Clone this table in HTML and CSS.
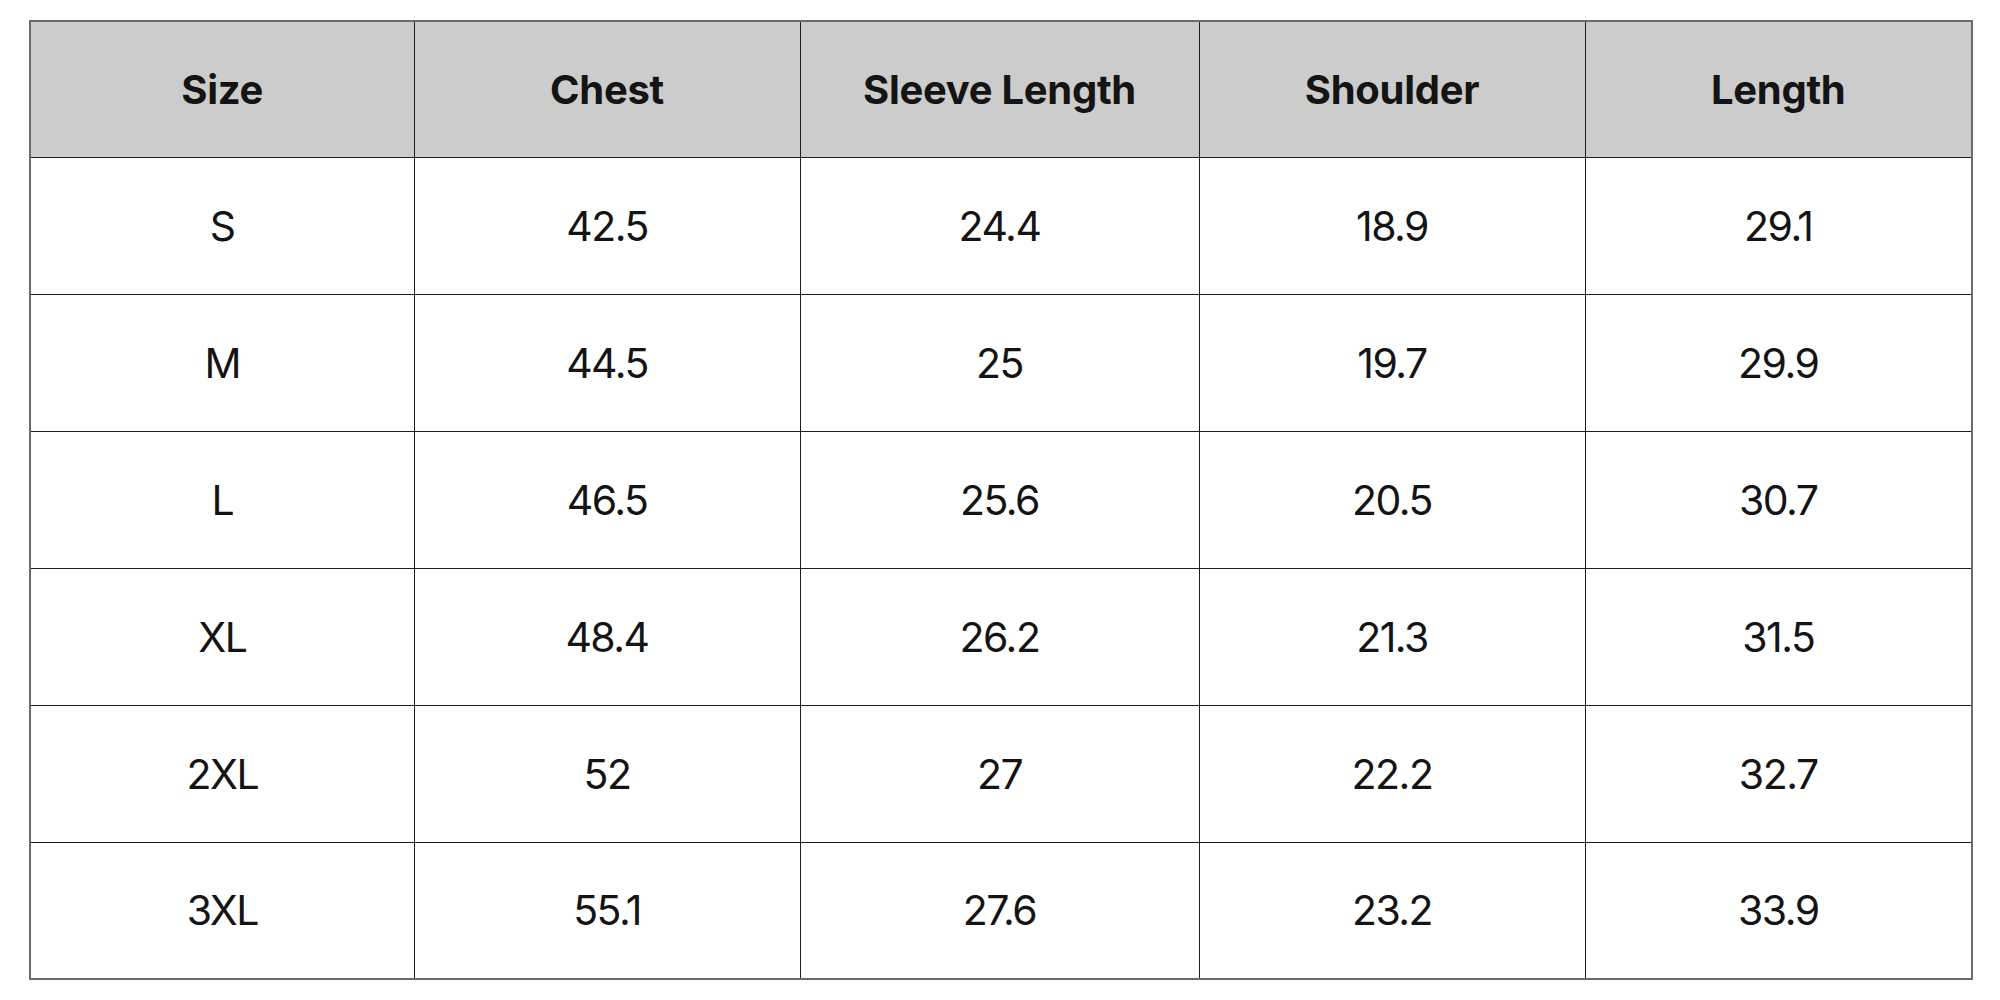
FILE: index.html
```html
<!DOCTYPE html>
<html>
<head>
<meta charset="utf-8">
<link rel="stylesheet" href="styles.css">
</head>
<body>
<table class="size-chart">
  <colgroup>
    <col class="c-size">
    <col class="c-chest">
    <col class="c-sleeve">
    <col class="c-shoulder">
    <col class="c-length">
  </colgroup>
  <thead>
    <tr><th>Size</th><th>Chest</th><th>Sleeve Length</th><th>Shoulder</th><th>Length</th></tr>
  </thead>
  <tbody>
    <tr><td>S</td><td>42.5</td><td>24.4</td><td>18.9</td><td>29.1</td></tr>
    <tr><td>M</td><td>44.5</td><td>25</td><td>19.7</td><td>29.9</td></tr>
    <tr><td>L</td><td>46.5</td><td>25.6</td><td>20.5</td><td>30.7</td></tr>
    <tr><td>XL</td><td>48.4</td><td>26.2</td><td>21.3</td><td>31.5</td></tr>
    <tr><td>2XL</td><td>52</td><td>27</td><td>22.2</td><td>32.7</td></tr>
    <tr><td>3XL</td><td>55.1</td><td>27.6</td><td>23.2</td><td>33.9</td></tr>
  </tbody>
</table>
</body>
</html>
```
FILE: styles.css
```css
html, body { background: #ffffff; }
body { margin: 0; padding: 20px 0 0 29px; }
.size-chart {
  border-collapse: collapse;
  table-layout: fixed;
  width: 1942px;
  font-family: Inter, "Liberation Sans", sans-serif;
  color: #141414;
  border: 2px solid #6a6a6a;
}
.c-size { width: 384px; }
.c-chest { width: 386px; }
.c-sleeve { width: 399px; }
.c-shoulder { width: 386px; }
.c-length { width: 387px; }
.size-chart th, .size-chart td {
  height: 137px;
  padding: 0;
  text-align: center;
  vertical-align: middle;
  border: 1px solid #1e1e1e;
  box-sizing: border-box;
}
.size-chart thead th {
  height: 136px;
  background: #cccccc;
  font-size: 40px;
  font-weight: 700;
  letter-spacing: -0.3px;
}
.size-chart td {
  font-size: 41px;
  font-weight: 400;
  letter-spacing: -1.5px;
}
```
